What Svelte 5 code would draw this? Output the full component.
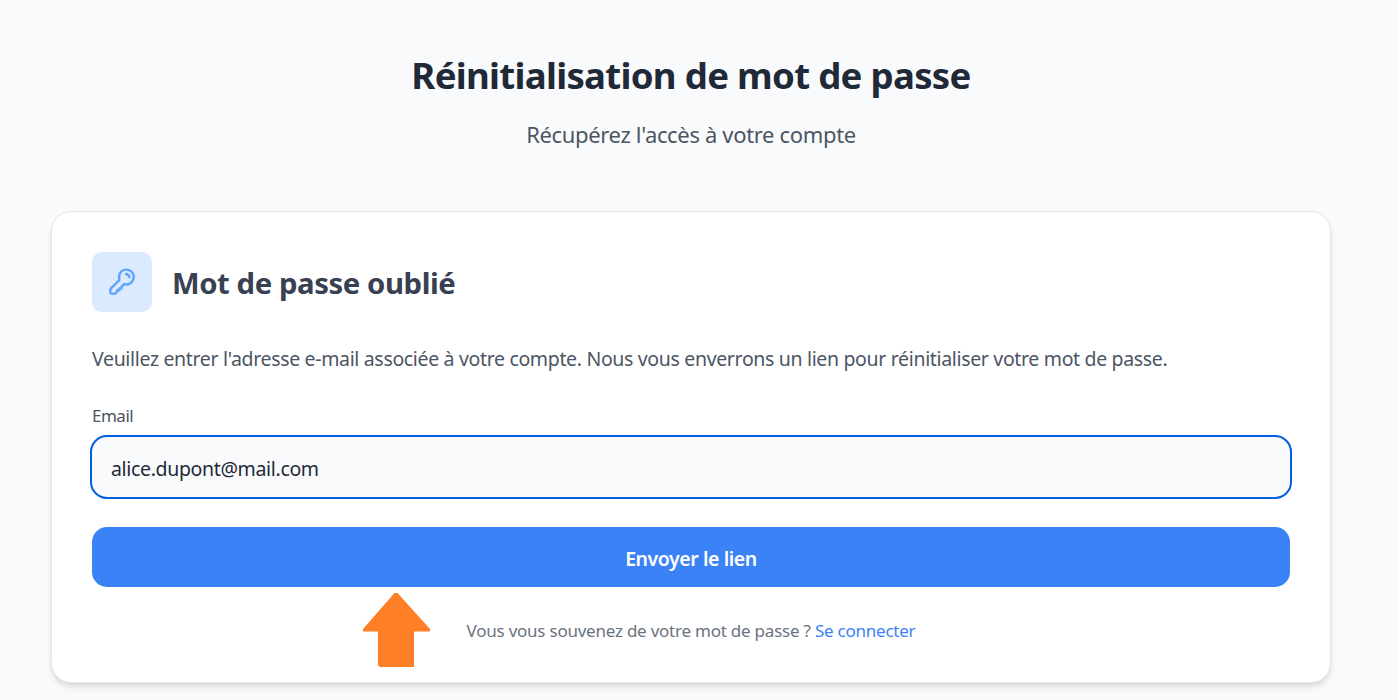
<script lang="ts">
    let email = $state("alice.dupont@mail.com");

    const submit = (e: SubmitEvent) => {
        e.preventDefault();
    };
</script>

<main>
    <header>
        <h1>Réinitialisation de mot de passe</h1>
        <p>Récupérez l'accès à votre compte</p>
    </header>

    <section class="card">
        <div class="card-header">
            <div class="icon-box">
                <svg viewBox="0 0 30 30" width="30" height="30">
                    <path d="M12.3 12.3A7.4 7.4 0 1 1 17.2 17.1L14.6 19.7V21.4H12.4V23.2H10.3V24.5L8.2 26.6H4.4Q3.4 26.6 3.4 25.6V22.8Q3.4 22 4 21.4L12.1 13.4ZM19 7Q22 7.3 22.4 10.4" />
                </svg>
            </div>
            <h2>Mot de passe oublié</h2>
        </div>

        <p class="intro">Veuillez entrer l'adresse e-mail associée à votre compte. Nous vous enverrons un lien pour réinitialiser votre mot de passe.</p>

        <form onsubmit={submit}>
            <label for="email">Email</label>
            <input id="email" type="text" bind:value={email} />
            <button type="submit">Envoyer le lien</button>
        </form>

        <p class="login"><span>Vous vous souvenez de votre mot de passe ?</span> <a href="#login">Se connecter</a></p>

        <svg class="arrow" viewBox="0 0 68 75" width="68" height="75">
            <path d="M32.5 0H35.5L68 36V38.5H52V74H18L16 72V38.5H1V36Z" />
        </svg>
    </section>
</main>

<style>
    :global(body) {
        background: #f9fafb;
    }

    main {
        box-sizing: border-box;
        width: 1382px;
        height: 700px;
        padding: 50px 51px 0;
        font-family: "Segoe UI", "Noto Sans", sans-serif;
    }

    header {
        height: 161px;
        text-align: center;
    }

    h1, h2, p {
        margin: 0;
        white-space: nowrap;
    }

    h1 {
        font-size: 36.6px;
        line-height: 50px;
        letter-spacing: -0.7px;
        color: #1f2937;
    }

    header p {
        margin-top: 17px;
        font-size: 22px;
        line-height: 35px;
        letter-spacing: -0.34px;
        color: #4b5563;
    }

    .card {
        position: relative;
        box-sizing: border-box;
        height: 472px;
        padding: 40px;
        background: #fff;
        border: 1px solid #e5e7eb;
        border-radius: 20px;
        box-shadow: 0 5px 7.5px -1px rgba(0, 0, 0, 0.1), 0 2.5px 5px -2.5px rgba(0, 0, 0, 0.1);
    }

    .card-header {
        display: flex;
        align-items: center;
        gap: 20px;
        margin-bottom: 29px;
    }

    .icon-box {
        display: flex;
        align-items: center;
        justify-content: center;
        width: 60px;
        height: 60px;
        background: #dbeafe;
        border-radius: 10px;
    }

    .icon-box svg {
        fill: none;
        stroke: #60a5fa;
        stroke-width: 2.4;
        stroke-linecap: round;
        stroke-linejoin: round;
    }

    h2 {
        padding-top: 2px;
        font-size: 29.3px;
        line-height: 40px;
        letter-spacing: -0.42px;
        color: #374151;
    }

    .intro {
        font-size: 19.5px;
        line-height: 35px;
        letter-spacing: -0.338px;
        color: #4b5563;
    }

    form {
        display: flex;
        flex-direction: column;
    }

    label {
        margin: 27px 0 9px;
        font-size: 17px;
        line-height: 25px;
        letter-spacing: -0.5px;
        color: #4b5563;
    }

    input {
        box-sizing: border-box;
        height: 60px;
        padding: 3px 19px 0;
        font: 19.5px "Segoe UI", "Noto Sans", sans-serif;
        letter-spacing: -0.34px;
        color: #1f2937;
        background: #f9fafb;
        border: 0;
        border-radius: 15px;
        outline: 2px solid #0060df;
    }

    button {
        height: 60px;
        margin-top: 30px;
        padding: 2px 0 0;
        font: 600 19.5px "Segoe UI", "Noto Sans", sans-serif;
        letter-spacing: -0.43px;
        color: #fff;
        background: #3b82f6;
        border: 0;
        border-radius: 15px;
    }

    .login {
        margin-top: 31px;
        font-size: 17px;
        line-height: 25px;
        letter-spacing: -0.23px;
        text-align: center;
        color: #6b7280;
    }

    a {
        color: #3b82f6;
        text-decoration: none;
    }

    .arrow {
        position: absolute;
        top: 381px;
        left: 310px;
        fill: #ff7f27;
    }
</style>
